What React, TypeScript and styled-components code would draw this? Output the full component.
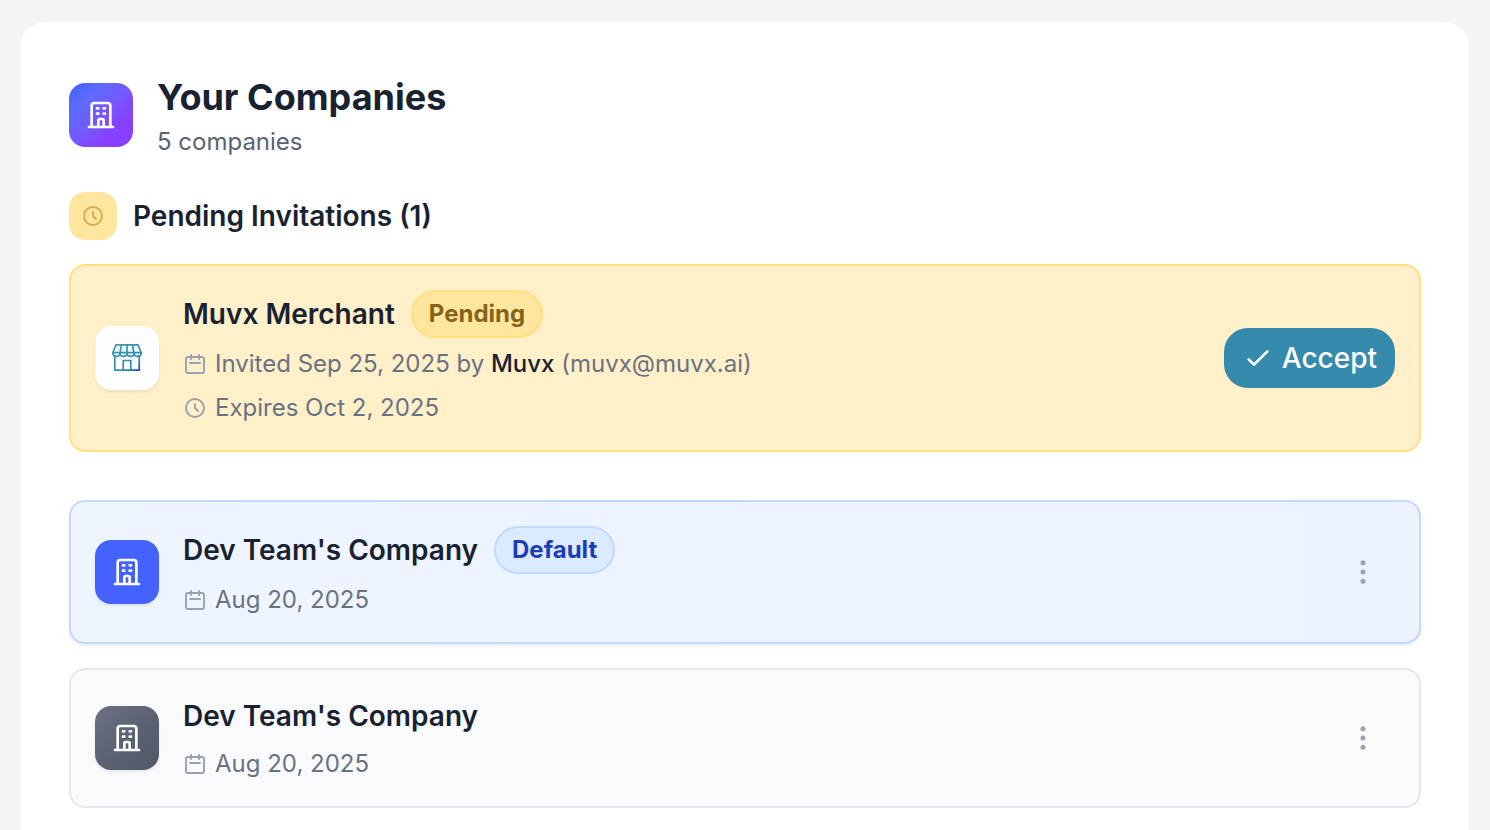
import React from "react";
import styled, { createGlobalStyle, css } from "styled-components";

const GlobalStyle = createGlobalStyle`
  *, *::before, *::after { box-sizing: border-box; }
  body {
    margin: 0;
    background: #f3f4f6;
    font-family: Inter, "Liberation Sans", sans-serif;
    color: #182230;
  }
  h1, h2, h3, p, ul { margin: 0; padding: 0; }
`;

const Page = styled.main`
  min-height: 100vh;
  padding: 22px 21px 0;
  display: flex;
`;

const Panel = styled.section`
  flex: 1;
  min-width: 0;
  padding: 48px 48px 22px;
  background: #fff;
  border-radius: 24px 24px 0 0;
`;

const Header = styled.header`
  display: flex;
  align-items: center;
  gap: 24px;
  margin-bottom: 32px;
`;

const Title = styled.h1`
  font-size: 36px;
  line-height: 54px;
  font-weight: 700;
`;

const Subtitle = styled.p`
  font-size: 24px;
  line-height: 36px;
  color: #5b6472;
`;

type Tone = "brand" | "blue" | "gray" | "white";

const tileTones: Record<Tone, ReturnType<typeof css>> = {
  brand: css`background: linear-gradient(135deg, #3f62ff 0%, #5f6aff 28%, #7656ff 52%, #873fff 75%, #8a3cff 100%);`,
  blue: css`background: #4362ff;`,
  gray: css`background: linear-gradient(135deg, #6a7282, #596170 60%, #4f5867);`,
  white: css`background: #fdfdfd;`,
};

const Tile = styled.div<{ $tone: Tone; $raised?: boolean }>`
  flex: none;
  width: 64px;
  height: 64px;
  display: grid;
  place-items: center;
  border-radius: 16px;
  color: #fff;
  ${({ $tone }) => tileTones[$tone]}
  ${({ $raised }) => $raised && css`box-shadow: 0 2px 3px rgba(16, 24, 40, 0.08);`}
`;

const SectionHeading = styled.div`
  display: flex;
  align-items: center;
  gap: 16px;
  margin-bottom: 24px;
`;

const SectionIcon = styled.div`
  width: 48px;
  height: 48px;
  display: grid;
  place-items: center;
  border-radius: 16px;
  background: #ffe69f;
  color: #d4ab45;
`;

const SectionTitle = styled.h2`
  font-size: 28px;
  line-height: 44px;
  font-weight: 600;
`;

type CardTone = "pending" | "default" | "plain";

const cardTones: Record<CardTone, ReturnType<typeof css>> = {
  pending: css`
    background: #fff0ca;
    border-color: #ffdf80;
  `,
  default: css`
    background: linear-gradient(90deg, #eff5ff, #ecf3ff);
    border-color: #bedbff;
    box-shadow: 0 2px 3px rgba(16, 24, 40, 0.08);
  `,
  plain: css`
    background: #f9fafc;
    border-color: #e5e7eb;
  `,
};

const Card = styled.article<{ $tone: CardTone }>`
  display: flex;
  align-items: center;
  gap: 24px;
  padding: 24px;
  border: 2px solid;
  border-radius: 16px;
  ${({ $tone }) => cardTones[$tone]}
`;

const Invitations = styled.section`
  margin-bottom: 48px;
`;

const Companies = styled.ul`
  display: flex;
  flex-direction: column;
  gap: 24px;
  list-style: none;
`;

const Details = styled.div`
  flex: 1;
  min-width: 0;
  display: flex;
  flex-direction: column;
  gap: 8px;
`;

const NameRow = styled.div`
  display: flex;
  align-items: center;
  gap: 16px;
`;

const Name = styled.h3`
  font-size: 28px;
  line-height: 44px;
  font-weight: 600;
`;

const Badge = styled.span<{ $tone: "yellow" | "blue" }>`
  padding: 0 16px;
  border: 2px solid;
  border-radius: 24px;
  font-size: 24px;
  line-height: 44px;
  font-weight: 700;
  ${({ $tone }) =>
    $tone === "yellow"
      ? css`background: #ffe69f; border-color: #ffdf80; color: #85641a;`
      : css`background: #dbeafe; border-color: #bedbff; color: #1c3cb8;`}
`;

const Meta = styled.p`
  display: flex;
  align-items: center;
  gap: 8px;
  font-size: 24px;
  line-height: 36px;
  color: #6a7282;

  svg { color: #99a1af; }
`;

const Inviter = styled.strong`
  font-weight: 500;
  color: #182230;
`;

const AcceptButton = styled.button`
  display: flex;
  align-items: center;
  gap: 8px;
  height: 60px;
  padding: 0 16px;
  border: 2px solid #368aab;
  border-radius: 24px;
  background: #368aab;
  color: #fff;
  font: 500 28px/44px Inter, "Liberation Sans", sans-serif;
  cursor: pointer;
`;

const MenuButton = styled.button`
  width: 64px;
  height: 64px;
  display: grid;
  place-items: center;
  padding: 0;
  border: 0;
  border-radius: 16px;
  background: transparent;
  color: #9ca3af;
  cursor: pointer;
`;

const StrokeIcon = styled.svg.attrs<{ $size: number; $stroke?: number }>(({ $stroke = 2 }) => ({
  viewBox: "0 0 24 24",
  fill: "none",
  stroke: "currentColor",
  strokeWidth: $stroke,
  strokeLinecap: "round",
  strokeLinejoin: "round",
  "aria-hidden": true,
}))`
  flex: none;
  display: block;
  width: ${({ $size }) => $size}px;
  height: ${({ $size }) => $size}px;
`;

const BuildingIcon = () => (
  <StrokeIcon $size={32}>
    <path d="M19 21V5a2 2 0 00-2-2H7a2 2 0 00-2 2v16m14 0h2m-2 0h-5m-9 0H3m2 0h5M9 7h1m-1 4h1m4-4h1m-1 4h1m-5 10v-5a1 1 0 011-1h2a1 1 0 011 1v5m-4 0h4" />
  </StrokeIcon>
);

const ClockIcon = () => (
  <StrokeIcon $size={24} $stroke={1.9}>
    <path d="M12 8v4l3 3m6-3a9 9 0 11-18 0 9 9 0 0118 0z" />
  </StrokeIcon>
);

const CalendarIcon = () => (
  <StrokeIcon $size={24} $stroke={1.9}>
    <path d="M8 7V3m8 4V3m-9 8h10M5 21h14a2 2 0 002-2V7a2 2 0 00-2-2H5a2 2 0 00-2 2v12a2 2 0 002 2z" />
  </StrokeIcon>
);

const CheckIcon = () => (
  <StrokeIcon $size={32}>
    <path d="M5 13l4 4L19 7" />
  </StrokeIcon>
);

const DotsIcon = () => (
  <StrokeIcon $size={32} $stroke={1.8}>
    <path d="M12 5v.01M12 12v.01M12 19v.01M12 6a1 1 0 110-2 1 1 0 010 2zm0 7a1 1 0 110-2 1 1 0 010 2zm0 7a1 1 0 110-2 1 1 0 010 2z" />
  </StrokeIcon>
);

const StoreIcon = () => (
  <svg width="32" height="32" viewBox="0 0 32 32" fill="none" strokeWidth="1.7" strokeLinejoin="round" aria-hidden="true">
    <defs>
      <linearGradient id="store" gradientUnits="userSpaceOnUse" x1="4" y1="2" x2="27" y2="30">
        <stop offset="0" stopColor="#4099b0" />
        <stop offset="0.78" stopColor="#3089aa" />
        <stop offset="0.9" stopColor="#2a62c0" />
        <stop offset="1" stopColor="#1c3fc4" />
      </linearGradient>
    </defs>
    <g stroke="url(#store)">
      <path d="M5 2.8h22l3.2 8H1.8z" fill="#eef7f9" />
      <path d="M10.4 2.8l-1.3 8M16 2.8v8M21.6 2.8l1.3 8" />
      <path d="M1.8 10.6v.7a3.55 3.1 0 007.1 0a3.55 3.1 0 007.1 0a3.55 3.1 0 007.1 0a3.55 3.1 0 007.1 0v-.7z" fill="#fff" />
      <path d="M3.8 14v14.2h24.4V14M12.2 28V18.5h7.6V28" />
    </g>
  </svg>
);

type Company = { id: number; name: string; date: string; isDefault: boolean };

const companies: Company[] = [
  { id: 1, name: "Dev Team's Company", date: "Aug 20, 2025", isDefault: true },
  { id: 2, name: "Dev Team's Company", date: "Aug 20, 2025", isDefault: false },
];

const CompanyCard = ({ company }: { company: Company }) => (
  <Card $tone={company.isDefault ? "default" : "plain"}>
    <Tile $tone={company.isDefault ? "blue" : "gray"} $raised>
      <BuildingIcon />
    </Tile>
    <Details>
      <NameRow>
        <Name>{company.name}</Name>
        {company.isDefault && <Badge $tone="blue">Default</Badge>}
      </NameRow>
      <Meta>
        <CalendarIcon />
        <span>{company.date}</span>
      </Meta>
    </Details>
    <MenuButton type="button" aria-label="Company options">
      <DotsIcon />
    </MenuButton>
  </Card>
);

export default function App() {
  return (
    <>
      <GlobalStyle />
      <Page>
        <Panel>
          <Header>
            <Tile $tone="brand">
              <BuildingIcon />
            </Tile>
            <div>
              <Title>Your Companies</Title>
              <Subtitle>5 companies</Subtitle>
            </div>
          </Header>

          <Invitations>
            <SectionHeading>
              <SectionIcon>
                <ClockIcon />
              </SectionIcon>
              <SectionTitle>Pending Invitations (1)</SectionTitle>
            </SectionHeading>
            <Card $tone="pending">
              <Tile $tone="white" $raised>
                <StoreIcon />
              </Tile>
              <Details>
                <NameRow>
                  <Name>Muvx Merchant</Name>
                  <Badge $tone="yellow">Pending</Badge>
                </NameRow>
                <Meta>
                  <CalendarIcon />
                  <span>
                    Invited Sep 25, 2025 by <Inviter>Muvx</Inviter> (muvx@muvx.ai)
                  </span>
                </Meta>
                <Meta>
                  <ClockIcon />
                  <span>Expires Oct 2, 2025</span>
                </Meta>
              </Details>
              <AcceptButton type="button">
                <CheckIcon />
                Accept
              </AcceptButton>
            </Card>
          </Invitations>

          <Companies>
            {companies.map((company) => (
              <li key={company.id}>
                <CompanyCard company={company} />
              </li>
            ))}
          </Companies>
        </Panel>
      </Page>
    </>
  );
}
